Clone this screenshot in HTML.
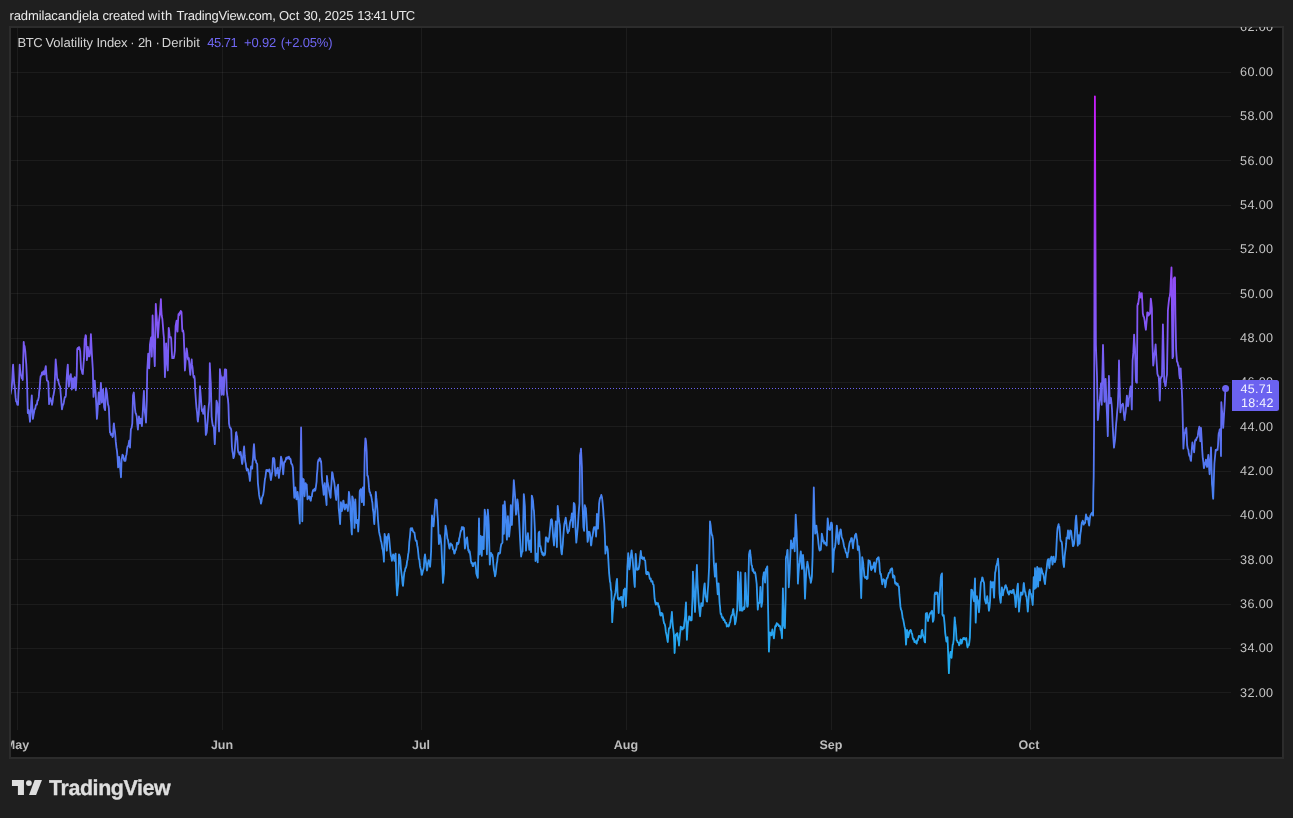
<!DOCTYPE html>
<html><head><meta charset="utf-8"><title>BTC Volatility Index</title>
<style>
html,body{margin:0;padding:0;}
body{-webkit-font-smoothing:antialiased;text-rendering:geometricPrecision;width:1293px;height:818px;background:#1f1f1f;position:relative;overflow:hidden;font-family:"Liberation Sans",sans-serif;}
#hdr,#leg,.yl,.xl,#plabel,#logotxt{will-change:transform;}
#hdr{position:absolute;left:0;top:7.7px;font-size:13px;line-height:15px;color:#e8e8e8;white-space:nowrap;}
#hdr span,#leg span{position:absolute;top:0;white-space:nowrap;}
#frame{position:absolute;left:9px;top:26px;width:1271px;height:729px;border:2px solid #2c2c2c;background:#0f0f0f;}
#chart{position:absolute;left:0;top:0;width:1293px;height:818px;}
#clip{position:absolute;left:11px;top:26.8px;width:1271px;height:730.2px;overflow:hidden;}
#clipin{position:absolute;left:-11px;top:-26.8px;width:1293px;height:818px;}
.yl{position:absolute;left:1240.4px;width:40px;font-size:12.6px;line-height:16px;color:#c4c4c4;white-space:nowrap;letter-spacing:0.4px;}
.xl{position:absolute;top:736.8px;width:60px;text-align:center;font-size:12.5px;line-height:16px;font-weight:bold;color:#bcbcbc;white-space:nowrap;}
#leg{position:absolute;left:0;top:35.2px;font-size:13px;line-height:16px;color:#d4d4d4;white-space:nowrap;}
#leg .v{color:#6f66f2;}
#plabel{position:absolute;left:1232px;top:380px;width:47px;height:31px;background:#6b62f0;border-radius:0 2.5px 2.5px 0;color:#f4f4ff;font-size:12.5px;line-height:14.5px;letter-spacing:0.25px;}
#plabel div{position:absolute;left:8.3px;white-space:nowrap;}
#logo{position:absolute;left:0;top:0;}
#logotxt{position:absolute;left:48.5px;top:774.5px;font-size:21.4px;line-height:26px;font-weight:bold;color:#dedede;white-space:nowrap;letter-spacing:-0.39px;-webkit-text-stroke:0.35px #dedede;}
</style></head>
<body>
<div id="hdr"><span style="left:9.5px;letter-spacing:-0.11px">radmilacandjela</span><span style="left:102.4px;letter-spacing:-0.17px">created</span><span style="left:147.8px;letter-spacing:0.43px">with</span><span style="left:176.5px;letter-spacing:-0.22px">TradingView.com,</span><span style="left:278.9px;letter-spacing:0.1px">Oct</span><span style="left:303.4px;letter-spacing:0px">30,</span><span style="left:324.6px;letter-spacing:0px">2025</span><span style="left:357.3px;letter-spacing:-0.6px">13:41</span><span style="left:390.0px;letter-spacing:-0.75px">UTC</span></div>
<div id="frame"></div>
<div id="clip"><div id="clipin">
<svg id="chart" width="1293" height="818" viewBox="0 0 1293 818">
<defs><linearGradient id="lg" gradientUnits="userSpaceOnUse" x1="0" y1="96" x2="0" y2="676"><stop offset="0.0000" stop-color="#c81efa"/><stop offset="0.1103" stop-color="#bd25f9"/><stop offset="0.2138" stop-color="#a636f8"/><stop offset="0.3000" stop-color="#9449f6"/><stop offset="0.3517" stop-color="#8952f6"/><stop offset="0.4293" stop-color="#7b5cf6"/><stop offset="0.5034" stop-color="#6d64f2"/><stop offset="0.5759" stop-color="#5e6ff2"/><stop offset="0.6448" stop-color="#507af3"/><stop offset="0.7224" stop-color="#4386f2"/><stop offset="0.8000" stop-color="#3791f0"/><stop offset="0.8776" stop-color="#2d9cef"/><stop offset="0.9552" stop-color="#23a7ef"/><stop offset="1.0000" stop-color="#1eaeef"/></linearGradient></defs>
<rect x="11" y="72" width="1220" height="1" fill="rgba(255,255,255,0.055)"/><rect x="11" y="116" width="1220" height="1" fill="rgba(255,255,255,0.055)"/><rect x="11" y="160" width="1220" height="1" fill="rgba(255,255,255,0.055)"/><rect x="11" y="205" width="1220" height="1" fill="rgba(255,255,255,0.055)"/><rect x="11" y="249" width="1220" height="1" fill="rgba(255,255,255,0.055)"/><rect x="11" y="293" width="1220" height="1" fill="rgba(255,255,255,0.055)"/><rect x="11" y="338" width="1220" height="1" fill="rgba(255,255,255,0.055)"/><rect x="11" y="382" width="1220" height="1" fill="rgba(255,255,255,0.055)"/><rect x="11" y="426" width="1220" height="1" fill="rgba(255,255,255,0.055)"/><rect x="11" y="471" width="1220" height="1" fill="rgba(255,255,255,0.055)"/><rect x="11" y="515" width="1220" height="1" fill="rgba(255,255,255,0.055)"/><rect x="11" y="559" width="1220" height="1" fill="rgba(255,255,255,0.055)"/><rect x="11" y="604" width="1220" height="1" fill="rgba(255,255,255,0.055)"/><rect x="11" y="648" width="1220" height="1" fill="rgba(255,255,255,0.055)"/><rect x="11" y="692" width="1220" height="1" fill="rgba(255,255,255,0.055)"/>
<rect x="17.00" y="28" width="1" height="702" fill="rgba(255,255,255,0.055)"/><rect x="222.00" y="28" width="1" height="702" fill="rgba(255,255,255,0.055)"/><rect x="421.00" y="28" width="1" height="702" fill="rgba(255,255,255,0.055)"/><rect x="626.00" y="28" width="1" height="702" fill="rgba(255,255,255,0.055)"/><rect x="831.00" y="28" width="1" height="702" fill="rgba(255,255,255,0.055)"/><rect x="1030.00" y="28" width="1" height="702" fill="rgba(255,255,255,0.055)"/>
<line x1="10" y1="388.5" x2="1231" y2="388.5" stroke="#6b62f0" stroke-width="1" stroke-dasharray="1 2"/>
<path d="M10.6,393.9 L11.2,390.0 L11.7,388.1 L12.3,379.4 L12.8,367.5 L13.1,364.6 L13.4,370.7 L14.2,383.7 L14.5,385.0 L15.0,389.5 L15.6,397.4 L16.1,401.3 L16.8,402.0 L17.3,404.6 L18.0,404.9 L18.4,394.4 L19.0,383.7 L19.7,364.6 L20.1,369.5 L20.9,374.9 L21.2,375.4 L21.8,378.2 L22.4,378.6 L22.7,380.0 L23.7,341.9 L24.0,345.3 L24.6,346.0 L25.3,351.4 L25.7,357.3 L26.3,364.6 L26.8,375.9 L27.1,383.7 L27.4,397.8 L27.8,413.0 L28.5,409.8 L28.8,410.1 L29.1,413.9 L29.6,417.8 L30.0,421.8 L30.8,411.0 L31.3,401.4 L31.8,395.4 L32.4,409.5 L32.9,418.9 L33.6,414.5 L34.1,412.4 L34.4,410.1 L34.7,409.0 L35.2,408.8 L35.8,405.5 L36.6,404.2 L36.9,404.5 L37.5,400.3 L38.0,400.6 L38.8,396.9 L39.2,391.8 L39.7,387.5 L40.3,379.1 L40.6,376.3 L41.4,375.6 L42.0,372.4 L42.5,374.6 L43.2,371.9 L43.6,371.2 L44.2,374.6 L44.6,374.0 L45.3,368.5 L45.8,366.1 L46.4,375.2 L46.9,380.7 L47.6,380.7 L48.3,382.2 L48.7,393.1 L49.1,404.2 L49.8,399.9 L50.5,398.3 L50.9,401.0 L51.5,401.2 L52.0,404.9 L52.6,401.9 L53.2,396.0 L53.5,395.4 L54.3,390.6 L54.6,386.6 L55.4,366.6 L55.7,359.5 L56.0,363.5 L56.5,368.7 L57.1,377.8 L57.6,380.3 L58.2,379.5 L58.6,382.2 L59.3,385.1 L60.1,386.6 L60.4,390.2 L61.1,398.3 L61.6,405.0 L62.0,409.3 L62.7,405.5 L63.4,404.2 L63.8,402.7 L64.5,398.3 L64.9,397.0 L65.5,397.0 L65.9,395.4 L66.7,377.8 L67.2,370.7 L67.8,364.6 L68.3,375.5 L68.9,386.6 L69.6,377.8 L70.0,376.2 L70.5,375.6 L70.8,374.1 L71.1,378.0 L71.8,389.5 L72.2,385.5 L72.8,378.5 L73.3,382.7 L73.7,388.1 L74.4,380.5 L74.7,377.1 L75.0,379.7 L75.8,390.3 L76.1,385.7 L76.7,374.9 L77.2,349.2 L77.8,347.9 L78.4,349.1 L79.1,347.0 L79.5,348.0 L80.2,351.4 L80.6,360.4 L81.1,369.0 L81.7,370.4 L82.3,373.4 L82.8,374.1 L83.4,365.8 L84.0,358.7 L84.7,338.9 L85.1,338.7 L85.6,335.2 L86.0,336.0 L86.9,360.2 L87.3,356.0 L87.9,347.0 L88.4,351.0 L89.0,356.5 L89.6,356.1 L90.1,352.9 L90.9,334.1 L91.2,340.4 L91.9,354.3 L92.4,362.6 L92.8,369.0 L93.5,396.9 L94.0,388.8 L94.8,380.7 L95.2,387.1 L95.7,393.9 L96.3,405.5 L96.9,418.9 L97.4,413.9 L97.8,407.1 L98.7,392.5 L99.1,396.4 L99.7,404.2 L100.2,396.0 L100.9,382.9 L101.3,389.9 L101.9,402.7 L102.4,397.5 L103.1,389.5 L103.6,396.9 L104.1,407.1 L104.7,409.3 L105.1,410.1 L106.0,388.1 L106.4,389.8 L107.0,393.9 L107.7,401.3 L108.0,404.4 L108.6,406.1 L108.9,408.6 L109.2,415.8 L109.9,432.1 L110.3,432.0 L110.8,434.8 L111.4,435.0 L112.0,434.0 L112.5,437.1 L112.9,436.5 L113.6,425.7 L113.9,423.3 L114.2,427.2 L114.9,431.4 L115.3,435.7 L115.8,441.9 L116.4,447.4 L117.0,451.2 L117.6,458.0 L118.1,467.4 L118.7,462.7 L119.1,457.0 L119.9,466.3 L120.4,470.3 L121.0,477.3 L121.6,459.3 L122.0,457.6 L122.5,454.7 L123.2,455.6 L123.9,459.3 L124.3,460.8 L124.8,458.7 L125.4,460.8 L125.7,459.3 L126.0,456.0 L126.5,454.7 L127.2,448.9 L127.6,446.6 L128.2,446.0 L128.6,444.2 L129.2,440.7 L130.0,447.7 L130.4,438.2 L130.9,429.1 L131.6,427.9 L132.3,423.3 L132.7,407.5 L133.0,395.4 L133.8,392.5 L134.6,403.6 L134.9,408.1 L135.5,412.9 L136.0,413.8 L136.7,416.3 L137.2,422.8 L137.9,429.7 L138.3,424.0 L139.0,416.3 L139.4,419.8 L140.0,423.3 L140.5,419.8 L140.8,418.7 L141.1,421.9 L141.6,424.0 L141.9,426.2 L142.2,421.8 L142.9,409.4 L143.3,400.6 L143.9,390.8 L144.4,404.8 L144.8,411.7 L145.6,417.6 L146.0,422.7 L146.8,400.0 L147.2,371.3 L147.8,361.4 L148.2,353.7 L148.9,362.7 L149.2,368.3 L149.5,359.5 L149.9,344.9 L150.6,340.2 L151.1,337.5 L151.8,356.6 L152.3,332.6 L152.6,315.5 L153.6,343.4 L154.0,349.3 L154.5,361.2 L154.8,366.1 L155.1,348.1 L155.8,303.8 L156.2,310.5 L157.0,321.4 L157.3,325.5 L158.0,337.5 L158.4,330.9 L159.0,321.4 L159.6,316.1 L159.9,314.1 L160.9,299.1 L161.2,307.5 L161.7,315.5 L162.4,319.2 L162.8,324.3 L163.5,333.6 L163.9,337.5 L164.6,364.0 L164.9,377.1 L165.2,370.9 L165.7,353.6 L166.1,343.4 L166.8,359.5 L167.4,366.5 L167.8,370.5 L168.7,328.0 L169.1,330.1 L169.6,335.4 L170.2,337.5 L170.8,337.1 L171.2,339.0 L171.9,353.5 L172.2,358.1 L173.0,357.8 L173.7,358.1 L174.1,356.6 L174.9,350.7 L175.2,337.7 L175.6,325.8 L176.6,320.7 L176.9,325.9 L177.5,331.7 L178.0,321.5 L178.5,314.1 L179.2,315.0 L179.7,312.5 L180.0,312.6 L180.3,313.5 L180.8,310.9 L181.5,311.9 L182.2,328.7 L182.5,331.3 L183.1,330.5 L183.7,333.9 L184.4,353.7 L184.9,370.5 L185.3,365.9 L185.9,356.6 L186.6,348.5 L187.0,350.4 L187.8,358.1 L188.1,359.6 L188.8,358.1 L189.2,362.3 L189.8,370.5 L190.3,374.9 L190.9,366.6 L191.7,359.5 L192.0,364.4 L192.6,367.9 L193.2,374.9 L193.7,377.5 L194.3,376.1 L194.7,378.6 L195.3,392.0 L196.0,402.0 L196.5,408.2 L197.1,412.6 L197.6,419.9 L197.9,421.6 L198.2,418.0 L198.8,414.0 L199.3,403.1 L200.0,386.2 L200.4,391.5 L200.8,396.6 L201.7,409.4 L202.1,411.4 L202.7,409.7 L203.2,413.8 L203.5,412.9 L203.8,409.7 L204.6,405.9 L204.9,414.5 L205.5,425.9 L205.8,434.9 L206.6,432.6 L206.9,430.3 L207.2,425.9 L207.7,420.6 L208.1,414.0 L208.8,405.7 L209.3,401.3 L209.8,363.2 L210.5,378.7 L210.8,383.0 L211.1,394.3 L211.6,416.3 L212.2,422.0 L212.8,425.6 L213.3,425.8 L213.9,428.0 L214.4,438.3 L214.8,444.2 L215.6,426.1 L215.9,419.8 L216.5,400.7 L217.4,403.6 L217.8,410.4 L218.2,415.2 L219.1,431.4 L219.5,400.7 L219.9,369.1 L220.6,375.3 L221.1,377.1 L221.8,394.8 L222.3,387.1 L223.0,377.1 L223.4,387.5 L223.7,394.8 L224.0,388.2 L224.5,377.4 L224.8,369.8 L225.1,369.2 L225.6,370.3 L226.2,369.8 L226.7,390.4 L227.3,395.4 L227.9,398.8 L228.4,404.7 L229.0,423.3 L229.6,426.7 L230.2,428.0 L230.7,428.1 L231.3,430.3 L231.9,446.5 L232.4,451.5 L232.9,453.6 L233.4,458.1 L234.0,456.6 L234.5,453.5 L235.2,443.7 L235.7,437.4 L236.0,432.6 L236.3,432.1 L236.8,436.8 L237.1,436.1 L237.4,439.9 L237.9,450.0 L238.5,452.6 L239.1,452.4 L239.5,454.7 L240.2,453.6 L240.6,451.8 L241.3,457.2 L242.1,464.0 L242.4,463.0 L242.9,459.3 L243.6,450.9 L244.1,446.5 L244.7,455.2 L245.3,461.6 L245.8,463.6 L246.4,468.6 L246.9,470.5 L247.5,468.6 L248.2,469.8 L248.6,473.0 L249.2,475.2 L249.9,481.0 L250.3,477.0 L250.8,468.9 L251.1,466.3 L251.4,467.8 L252.2,468.6 L252.5,463.1 L253.1,457.6 L253.6,448.4 L254.0,444.2 L254.8,456.5 L255.1,460.0 L255.9,460.3 L256.2,462.6 L257.2,464.0 L257.6,474.7 L257.9,483.1 L258.7,490.4 L259.1,494.9 L259.8,498.7 L260.4,499.6 L260.9,503.7 L261.5,501.5 L262.0,497.5 L262.6,496.3 L263.2,494.6 L263.8,490.5 L264.3,485.1 L265.0,478.7 L265.4,477.5 L266.0,472.3 L266.4,469.9 L267.1,471.0 L267.6,470.0 L268.2,471.4 L268.8,471.5 L269.3,469.4 L269.7,470.6 L270.4,477.1 L270.9,480.2 L271.6,475.6 L272.3,471.4 L272.9,458.2 L273.2,458.9 L273.8,457.9 L274.4,459.6 L274.9,468.1 L275.5,475.8 L276.0,472.8 L276.6,473.1 L277.2,468.6 L277.8,467.7 L278.3,473.7 L278.9,478.0 L279.4,473.1 L280.2,468.4 L280.5,464.3 L281.0,456.7 L281.6,458.9 L282.2,462.6 L282.8,469.7 L283.2,474.3 L284.1,462.6 L284.4,461.7 L285.0,461.9 L285.8,459.6 L286.1,458.0 L286.7,459.1 L287.2,457.2 L287.6,457.4 L288.4,458.4 L288.9,456.6 L289.5,459.0 L289.9,458.2 L290.6,459.3 L291.2,463.5 L291.7,464.0 L292.3,465.0 L292.9,467.7 L293.6,483.1 L294.0,492.0 L294.3,497.8 L295.1,489.0 L295.4,487.5 L296.2,496.5 L296.5,499.3 L296.8,496.0 L297.3,495.0 L297.6,491.9 L297.9,494.7 L298.6,503.7 L299.0,511.2 L299.8,523.5 L300.1,498.7 L300.7,460.0 L301.1,427.5 L301.8,481.4 L302.3,521.3 L302.8,478.7 L303.7,479.4 L304.0,486.8 L304.6,496.3 L305.2,487.5 L305.6,483.1 L306.3,485.4 L306.7,484.6 L307.5,499.3 L308.0,496.9 L308.5,498.2 L309.0,496.3 L309.6,496.7 L310.2,499.8 L310.8,500.7 L311.3,496.7 L311.9,496.4 L312.2,493.4 L313.0,490.3 L313.7,489.7 L314.1,490.8 L314.7,488.7 L315.2,490.6 L315.6,489.0 L316.6,481.6 L316.9,475.0 L317.5,469.2 L317.8,462.6 L318.6,459.6 L319.2,460.6 L319.6,458.2 L320.3,458.8 L320.8,462.1 L321.1,461.1 L321.4,466.0 L321.8,475.8 L322.5,483.9 L322.8,486.0 L323.1,488.3 L323.7,494.9 L324.2,489.9 L324.7,483.1 L325.3,490.3 L325.7,496.3 L326.6,505.1 L326.9,475.8 L327.6,481.9 L328.1,484.6 L328.7,487.1 L329.1,490.5 L329.8,494.3 L330.6,497.8 L330.9,491.0 L331.5,483.1 L332.1,472.1 L332.6,473.1 L333.2,477.6 L333.5,478.7 L334.3,482.7 L334.7,486.0 L335.4,493.9 L336.2,500.0 L336.5,495.5 L337.2,487.5 L337.6,486.6 L338.1,484.6 L338.7,508.1 L339.3,514.2 L340.1,524.2 L340.4,516.1 L340.9,502.2 L341.6,506.6 L341.9,511.0 L342.7,507.2 L343.2,500.8 L343.5,500.7 L343.8,503.7 L344.4,505.0 L344.8,509.5 L345.5,507.6 L346.0,504.7 L346.3,504.4 L346.6,506.6 L347.2,507.3 L347.9,511.0 L348.3,505.0 L348.9,491.9 L349.4,495.1 L350.1,502.2 L350.5,513.7 L350.8,519.8 L351.1,522.1 L351.6,532.1 L351.9,534.5 L352.2,496.3 L352.8,497.9 L353.3,501.8 L353.6,502.2 L353.9,508.8 L354.5,527.9 L355.0,511.5 L355.3,499.3 L355.6,504.8 L356.3,522.7 L356.7,523.0 L357.3,519.8 L357.8,524.7 L358.2,531.5 L358.9,519.8 L359.2,513.9 L359.7,491.9 L360.0,490.1 L360.6,490.5 L361.0,489.0 L361.9,502.2 L362.3,495.6 L362.9,487.5 L363.4,497.3 L363.9,505.1 L364.5,465.4 L364.8,449.0 L365.1,444.4 L365.4,438.3 L366.0,441.0 L366.7,452.0 L367.3,475.8 L367.9,475.9 L368.3,478.7 L369.0,487.4 L369.5,491.9 L370.1,492.3 L370.7,495.6 L371.0,494.9 L372.0,500.7 L372.4,502.7 L372.9,509.5 L373.2,511.0 L373.5,513.2 L374.0,521.5 L374.3,524.2 L374.6,518.4 L375.4,506.6 L375.8,491.9 L376.3,497.7 L376.8,502.2 L377.4,509.5 L378.0,519.8 L378.7,527.9 L379.1,531.9 L379.8,535.2 L380.2,536.4 L380.8,540.6 L381.3,541.8 L381.7,544.0 L382.4,548.8 L382.8,549.9 L383.6,556.7 L383.9,561.7 L384.6,533.8 L385.2,537.1 L385.6,536.7 L386.4,544.6 L386.8,550.7 L387.5,536.7 L388.0,536.0 L388.6,533.8 L389.2,538.4 L389.7,544.0 L390.3,550.8 L390.9,555.8 L391.4,556.8 L391.9,560.9 L392.5,558.0 L393.1,554.3 L393.6,555.7 L394.4,560.9 L394.8,559.1 L395.3,554.7 L395.6,553.6 L395.9,565.1 L396.3,580.7 L397.1,595.4 L397.6,589.7 L398.3,583.7 L398.7,568.5 L399.0,554.3 L400.0,557.3 L400.4,560.4 L400.9,568.3 L401.5,573.4 L402.0,577.4 L402.6,583.8 L403.0,585.9 L403.7,578.2 L404.4,571.9 L404.8,571.6 L405.4,568.3 L406.0,567.8 L406.6,565.3 L407.1,561.2 L407.6,559.4 L408.2,554.1 L408.5,552.9 L408.8,550.6 L409.3,542.0 L409.6,539.6 L409.9,537.0 L410.6,528.6 L411.0,528.2 L411.6,530.1 L412.1,528.1 L412.5,529.4 L413.2,531.8 L414.0,532.3 L414.4,532.5 L415.0,536.7 L415.5,539.9 L416.0,541.0 L416.6,540.7 L416.9,542.6 L417.2,545.2 L417.7,547.7 L418.4,554.3 L418.8,558.7 L419.4,559.8 L420.0,565.9 L420.3,567.5 L421.1,570.2 L421.6,574.8 L422.0,574.9 L422.8,571.3 L423.5,569.0 L423.9,566.9 L424.4,558.3 L425.0,554.3 L425.6,559.6 L426.1,563.2 L426.9,570.5 L427.2,569.7 L427.8,564.4 L428.6,560.2 L428.9,562.1 L429.5,562.7 L430.1,566.8 L430.6,560.0 L431.1,551.4 L431.7,525.3 L432.0,515.4 L432.3,517.9 L432.8,520.7 L433.5,526.4 L434.0,520.9 L434.5,511.8 L435.1,504.2 L435.5,499.3 L436.2,500.3 L436.7,500.0 L437.4,513.2 L437.9,519.9 L438.2,526.4 L438.9,544.0 L439.6,539.7 L439.9,535.2 L440.7,539.0 L441.4,545.5 L441.8,555.1 L442.3,566.1 L443.0,582.9 L443.5,577.4 L444.0,573.4 L444.8,536.7 L445.2,532.3 L445.5,525.7 L446.3,529.7 L447.0,535.2 L447.4,538.6 L448.0,539.8 L448.5,543.3 L449.1,546.7 L449.5,548.5 L450.2,545.0 L450.7,543.3 L451.3,544.9 L451.9,544.6 L452.6,547.0 L453.0,549.5 L453.6,549.7 L454.3,553.6 L454.7,553.2 L455.2,550.7 L455.8,549.9 L456.4,547.8 L456.9,543.1 L457.3,542.6 L458.0,544.2 L458.7,542.6 L459.2,538.4 L459.7,537.1 L460.2,533.8 L460.8,530.9 L461.4,530.6 L461.7,527.9 L462.0,527.0 L462.5,529.2 L463.1,527.2 L463.6,528.8 L463.9,527.9 L464.2,533.1 L464.9,548.5 L465.3,546.8 L466.1,541.1 L466.4,538.8 L467.1,537.4 L467.6,542.8 L468.3,550.7 L468.7,549.7 L469.2,552.6 L469.7,551.4 L470.4,556.1 L470.8,560.2 L471.5,563.2 L472.0,562.8 L472.7,566.1 L473.2,566.0 L473.7,563.3 L474.1,563.1 L474.8,563.2 L475.2,562.4 L476.0,569.0 L476.3,573.4 L477.1,576.0 L477.8,577.8 L478.2,560.4 L478.5,549.9 L479.0,518.4 L479.3,536.2 L479.7,554.3 L480.4,539.5 L480.7,536.0 L481.0,542.8 L481.8,555.8 L482.1,545.9 L482.5,536.7 L483.2,545.2 L483.7,549.2 L484.4,522.0 L484.7,509.6 L485.5,515.3 L485.9,516.9 L486.6,541.5 L486.9,554.3 L487.2,542.7 L487.8,509.6 L488.3,516.3 L488.8,525.0 L489.4,550.2 L489.8,564.6 L490.5,556.3 L491.0,552.9 L491.6,555.8 L492.2,554.5 L492.8,557.3 L493.3,563.9 L494.0,570.5 L494.4,571.6 L495.0,576.3 L495.6,574.3 L496.2,569.0 L496.7,563.8 L497.2,561.6 L497.6,557.3 L498.4,553.0 L498.7,552.9 L499.5,553.7 L500.1,552.9 L500.6,547.9 L501.3,544.0 L501.7,543.9 L502.5,542.6 L502.8,520.6 L503.1,505.2 L503.4,516.8 L503.9,533.8 L504.7,501.5 L505.1,506.8 L505.7,516.2 L506.2,526.7 L506.9,539.6 L507.3,528.6 L507.9,516.2 L508.4,526.5 L509.1,536.7 L509.6,531.3 L510.1,526.4 L510.8,505.2 L511.2,514.6 L511.9,525.0 L512.4,512.0 L512.7,504.4 L513.5,488.0 L513.8,480.2 L514.8,492.7 L515.2,498.1 L515.7,510.6 L516.0,514.7 L516.3,510.6 L516.8,506.3 L517.4,499.3 L518.0,504.0 L518.5,513.1 L518.9,516.2 L519.6,529.4 L520.1,539.6 L520.8,552.0 L521.1,556.5 L521.9,552.3 L522.6,551.4 L523.0,532.7 L523.8,494.2 L524.1,496.7 L524.9,506.6 L525.2,521.5 L526.0,550.7 L526.4,544.7 L526.8,538.9 L527.5,536.1 L527.9,533.1 L528.6,541.1 L529.3,549.9 L529.7,546.8 L530.4,540.4 L530.8,547.0 L531.1,552.1 L531.4,528.3 L531.8,495.6 L532.5,498.1 L533.0,500.8 L533.6,508.8 L534.0,511.0 L534.9,530.1 L535.5,561.0 L535.9,557.6 L536.4,556.2 L536.7,553.6 L537.0,554.7 L537.7,562.4 L538.1,549.8 L538.6,533.1 L539.3,531.6 L539.9,546.3 L540.4,545.8 L541.1,549.2 L541.5,552.0 L542.0,551.8 L542.3,554.3 L542.6,554.7 L543.2,553.2 L543.7,555.6 L544.0,554.3 L544.3,553.6 L544.8,554.8 L545.2,552.9 L545.8,537.5 L546.5,537.4 L547.0,538.2 L547.6,541.3 L548.1,541.9 L548.8,538.7 L549.2,537.5 L549.9,530.1 L550.4,525.5 L550.9,519.9 L551.6,519.2 L552.1,520.6 L552.8,531.6 L553.2,537.1 L554.0,545.5 L554.4,539.5 L555.0,533.1 L555.5,526.9 L555.8,521.3 L556.6,539.0 L556.9,547.0 L557.2,534.7 L557.7,505.9 L558.3,511.5 L558.7,516.9 L559.4,522.7 L559.9,525.7 L560.5,538.2 L560.9,547.7 L561.6,553.6 L561.9,554.3 L562.2,549.8 L562.8,544.5 L563.1,538.9 L563.9,528.7 L564.3,524.3 L565.0,521.3 L565.7,517.7 L566.1,520.7 L566.8,527.2 L567.2,530.2 L567.8,533.1 L568.4,530.9 L568.9,531.1 L569.3,528.7 L570.0,522.9 L570.4,521.3 L571.2,518.7 L571.9,513.3 L572.3,517.3 L572.9,527.2 L573.4,514.1 L573.8,503.0 L574.5,504.0 L574.8,506.6 L575.1,516.4 L575.6,530.1 L576.3,542.6 L576.8,537.4 L577.5,530.1 L577.9,526.0 L578.5,515.5 L579.0,508.7 L579.5,503.7 L580.0,455.3 L580.7,451.7 L581.0,448.7 L581.9,467.0 L582.5,503.7 L582.9,513.1 L583.4,527.2 L584.1,530.9 L584.8,505.2 L585.2,506.9 L585.8,508.1 L586.3,515.0 L586.6,521.3 L587.6,541.9 L588.0,540.3 L588.5,532.8 L588.8,531.6 L589.1,533.2 L589.6,532.1 L590.0,534.5 L591.0,545.5 L591.3,544.8 L591.9,538.8 L592.5,536.0 L593.0,533.1 L593.6,528.7 L594.1,527.1 L594.7,528.5 L595.1,527.2 L595.8,533.3 L596.1,536.7 L596.4,529.7 L596.9,514.0 L597.5,520.8 L598.0,528.7 L598.6,515.5 L599.1,503.7 L599.7,499.5 L600.2,497.8 L600.8,497.3 L601.3,494.9 L602.0,497.5 L602.4,500.8 L603.2,509.6 L603.6,516.1 L604.2,522.8 L604.9,536.0 L605.4,553.6 L605.9,550.0 L606.4,549.0 L606.8,546.3 L607.6,548.9 L607.9,552.0 L608.8,567.9 L609.2,574.0 L610.0,581.8 L610.4,582.7 L610.9,589.6 L611.4,591.4 L612.2,622.2 L612.6,614.6 L613.2,607.6 L613.5,601.6 L614.3,597.4 L614.7,595.8 L615.4,592.9 L615.9,588.4 L616.5,581.7 L617.0,578.9 L617.6,594.1 L617.9,598.7 L618.2,598.0 L618.8,599.7 L619.3,598.0 L619.8,599.4 L620.4,599.7 L621.0,596.9 L621.7,597.2 L622.1,602.3 L622.8,607.5 L623.2,598.5 L623.8,589.9 L624.4,589.8 L624.9,588.5 L625.5,599.1 L625.8,606.0 L626.7,588.4 L627.4,566.4 L627.7,562.7 L628.2,553.2 L628.8,560.3 L629.4,569.4 L630.0,565.1 L630.4,559.1 L631.1,553.7 L631.6,550.3 L632.2,556.0 L632.6,559.1 L633.3,568.1 L633.8,575.2 L634.4,583.6 L634.8,587.0 L635.7,553.9 L636.1,559.3 L636.7,569.4 L637.2,569.9 L637.8,568.4 L638.5,569.4 L638.9,567.6 L639.6,563.5 L640.0,558.5 L640.8,551.0 L641.2,554.8 L641.8,558.3 L642.3,557.1 L642.8,559.0 L643.6,557.6 L644.0,557.5 L644.5,560.2 L645.2,560.5 L645.6,565.8 L646.2,573.8 L646.8,574.2 L647.3,571.8 L647.9,574.0 L648.4,572.3 L649.0,574.5 L649.6,577.9 L649.9,578.9 L650.7,578.5 L651.2,581.7 L651.7,581.1 L652.4,581.1 L652.9,584.1 L653.6,584.8 L654.0,590.1 L654.6,598.7 L655.2,602.1 L655.8,604.6 L656.3,602.7 L656.8,604.3 L657.2,603.1 L658.0,603.2 L658.5,606.8 L659.0,606.0 L659.6,610.0 L660.2,614.9 L660.8,615.5 L661.3,612.9 L661.9,615.3 L662.4,613.4 L663.0,616.5 L663.4,620.0 L664.1,623.3 L664.7,624.0 L665.3,626.6 L665.8,631.7 L666.3,633.9 L666.9,636.8 L667.5,640.7 L667.8,642.0 L668.6,631.7 L669.0,628.1 L669.7,628.1 L670.2,626.6 L670.8,620.7 L671.2,619.3 L671.9,611.9 L672.5,621.7 L672.9,626.6 L673.8,633.9 L674.2,642.1 L674.6,653.0 L675.3,640.7 L675.6,635.4 L675.9,634.5 L676.4,635.5 L677.0,633.3 L677.4,633.2 L678.1,639.5 L678.7,642.0 L679.0,645.7 L680.0,633.9 L680.4,631.4 L680.7,626.6 L681.5,627.4 L682.2,629.5 L682.6,629.4 L683.2,627.2 L683.7,628.3 L684.0,626.6 L684.3,623.2 L684.8,619.2 L685.1,616.3 L685.4,610.4 L686.0,602.4 L686.5,625.1 L686.9,639.8 L687.6,627.5 L688.1,622.2 L688.8,619.8 L689.1,616.3 L689.9,616.8 L690.3,619.3 L691.0,620.5 L691.7,620.0 L692.1,607.5 L692.5,598.7 L692.9,571.6 L693.2,578.0 L693.9,588.4 L694.4,597.5 L695.0,611.9 L695.7,595.8 L696.0,587.9 L696.6,571.2 L696.9,565.0 L697.2,573.5 L697.6,584.0 L698.3,595.3 L698.6,601.6 L699.4,610.2 L700.1,616.3 L700.5,610.9 L701.3,603.1 L701.6,604.6 L702.2,604.1 L702.7,606.0 L703.3,597.7 L703.8,589.9 L704.4,584.6 L704.7,583.3 L705.0,588.5 L705.7,597.2 L706.1,597.2 L706.7,601.3 L707.1,601.6 L707.8,590.0 L708.2,585.5 L709.1,567.2 L709.5,548.9 L710.0,521.3 L710.6,525.1 L711.2,531.1 L711.9,535.2 L712.3,535.4 L713.0,540.0 L713.4,551.7 L713.8,562.0 L714.5,571.3 L714.9,576.7 L715.6,568.8 L716.0,563.5 L716.7,581.1 L717.3,588.3 L717.7,594.3 L718.6,583.3 L719.0,592.3 L719.6,603.1 L720.1,607.3 L720.4,611.9 L720.7,614.1 L721.2,613.7 L721.8,617.1 L722.4,618.1 L722.9,617.2 L723.5,620.1 L724.0,619.3 L724.6,620.3 L725.2,622.5 L725.5,622.9 L726.3,622.9 L726.8,626.6 L727.3,625.9 L728.0,625.2 L728.5,626.5 L729.2,625.1 L729.6,622.8 L730.2,622.2 L730.6,619.3 L731.3,616.0 L732.1,614.9 L732.4,613.9 L733.0,609.9 L733.3,609.0 L733.6,612.2 L734.3,616.3 L734.7,619.7 L735.0,624.4 L735.8,621.3 L736.2,617.8 L736.9,611.7 L737.2,610.5 L737.5,597.6 L738.0,571.6 L738.6,583.7 L739.0,594.3 L739.9,610.5 L740.3,590.9 L740.6,572.3 L741.6,610.5 L742.0,609.2 L742.5,610.6 L743.1,609.0 L743.6,607.2 L744.2,609.1 L744.6,607.5 L745.3,573.0 L745.9,584.7 L746.3,595.8 L747.2,606.8 L747.6,606.7 L748.0,604.6 L748.7,569.3 L749.0,554.7 L749.6,551.4 L750.1,550.3 L750.4,554.2 L750.9,557.6 L751.2,562.0 L751.5,565.0 L752.0,565.7 L752.3,568.6 L752.6,570.8 L753.2,569.2 L753.5,571.6 L754.3,573.1 L755.0,572.3 L755.4,573.7 L756.0,578.2 L756.7,584.0 L757.1,594.1 L757.8,609.7 L758.2,605.1 L758.6,603.1 L759.3,603.0 L759.7,601.6 L760.4,587.0 L761.0,598.0 L761.4,606.8 L762.3,601.6 L762.9,578.2 L763.2,577.0 L763.8,572.5 L764.1,572.3 L764.4,576.6 L765.1,582.6 L765.5,574.6 L765.8,569.4 L766.6,568.3 L767.3,566.4 L767.8,594.3 L768.2,613.4 L768.9,651.6 L769.4,642.3 L770.0,632.5 L770.5,634.4 L771.1,634.0 L771.4,635.4 L772.4,629.5 L772.8,633.2 L773.3,634.5 L773.9,638.3 L774.4,633.7 L775.1,626.6 L775.6,625.5 L776.1,626.4 L776.7,623.2 L777.3,623.7 L777.8,624.7 L778.4,624.4 L778.9,626.2 L779.5,625.9 L780.0,626.1 L780.6,630.0 L781.0,629.5 L781.7,635.5 L782.0,638.3 L782.3,623.2 L782.9,588.4 L783.4,606.2 L783.9,625.1 L784.5,627.6 L784.9,628.1 L785.6,598.7 L785.9,558.7 L786.2,556.5 L786.8,555.5 L787.3,550.3 L787.6,549.9 L787.9,559.2 L788.4,575.5 L788.8,587.3 L789.6,572.7 L790.0,563.1 L790.7,547.1 L791.0,540.3 L791.8,545.9 L792.5,548.4 L792.9,544.6 L793.5,542.2 L793.9,538.1 L794.7,551.3 L795.2,533.1 L795.7,514.6 L796.3,526.0 L796.6,530.8 L797.3,551.3 L797.9,583.6 L798.5,573.9 L799.1,566.0 L799.6,562.7 L800.1,557.2 L800.8,551.3 L801.3,557.4 L802.0,568.9 L802.4,563.5 L803.0,555.0 L803.6,561.9 L804.2,571.9 L804.7,589.5 L805.0,598.7 L805.8,580.7 L806.4,568.9 L806.9,565.7 L807.4,561.6 L808.0,565.1 L808.6,568.9 L809.2,574.5 L809.8,577.7 L810.3,578.9 L810.8,582.9 L811.4,580.1 L811.9,576.3 L812.6,555.7 L813.2,519.0 L813.8,487.5 L814.2,504.5 L814.5,519.0 L814.8,525.4 L815.2,533.7 L815.9,528.4 L816.4,525.6 L817.0,532.0 L817.4,533.7 L818.1,539.3 L818.5,544.0 L819.2,549.1 L819.6,550.6 L820.4,549.8 L820.8,549.9 L821.5,539.8 L821.8,533.7 L822.6,537.2 L822.9,539.6 L823.2,541.6 L823.7,540.5 L824.0,542.5 L824.3,543.7 L824.8,542.4 L825.5,543.3 L826.0,544.7 L826.7,545.5 L827.1,534.4 L827.7,518.3 L828.2,523.5 L828.9,529.3 L829.3,528.1 L830.0,530.0 L830.4,528.1 L831.1,522.7 L831.6,522.6 L832.1,524.9 L832.8,571.9 L833.2,565.3 L833.9,551.3 L834.4,548.8 L835.0,546.9 L835.5,543.5 L835.8,539.6 L836.8,525.6 L837.2,529.5 L837.7,536.6 L838.3,542.2 L838.7,544.0 L839.4,535.4 L839.7,532.2 L840.0,533.1 L840.5,529.3 L840.9,530.0 L841.6,536.4 L842.1,538.1 L842.8,539.9 L843.4,542.5 L843.9,545.5 L844.6,548.4 L845.0,548.3 L845.6,551.7 L846.1,552.8 L846.7,553.7 L847.2,557.3 L847.5,557.2 L847.8,553.5 L848.4,552.0 L848.7,548.4 L849.5,543.2 L850.2,541.1 L850.6,541.1 L851.2,538.1 L851.9,538.1 L852.3,542.5 L853.0,548.4 L853.4,543.7 L854.1,539.6 L854.5,538.7 L855.1,535.0 L855.6,535.1 L855.9,533.7 L856.2,534.2 L856.8,538.9 L857.1,539.6 L857.8,549.9 L858.4,547.0 L858.8,546.2 L859.7,554.3 L860.1,569.7 L860.4,577.7 L860.7,584.1 L861.2,598.0 L861.8,574.2 L862.2,557.2 L862.9,561.0 L863.2,563.1 L863.5,566.9 L864.0,571.4 L864.4,576.3 L865.2,577.9 L865.9,577.0 L866.3,576.6 L866.8,579.0 L867.6,578.5 L868.0,570.7 L868.5,560.1 L869.1,561.3 L869.8,560.9 L870.2,562.7 L871.0,568.9 L871.3,570.1 L871.9,566.6 L872.4,568.6 L873.2,566.7 L873.6,564.8 L874.2,562.3 L874.7,568.2 L875.1,571.9 L875.8,564.5 L876.1,563.1 L876.4,562.7 L876.9,558.8 L877.2,558.7 L877.5,559.3 L878.0,557.5 L878.6,557.2 L879.4,563.1 L879.8,570.4 L880.3,574.1 L880.8,573.6 L881.3,577.0 L882.0,582.4 L882.3,584.3 L883.1,579.9 L883.5,579.2 L884.2,580.5 L884.5,580.0 L884.8,581.9 L885.2,587.3 L885.9,584.1 L886.4,579.9 L887.0,577.8 L887.6,577.9 L887.9,576.3 L888.7,573.4 L889.3,572.6 L889.8,572.7 L890.4,569.8 L891.1,568.9 L891.5,569.7 L892.0,568.3 L892.3,569.7 L892.6,573.9 L893.0,577.7 L893.7,575.5 L894.5,576.3 L894.8,580.9 L895.2,583.6 L896.0,582.6 L896.5,584.8 L897.1,584.3 L897.6,583.6 L898.2,586.1 L898.9,586.6 L899.4,594.7 L899.9,599.8 L900.4,606.4 L901.0,609.6 L901.6,610.6 L902.3,615.2 L902.7,618.3 L903.2,619.3 L903.8,622.6 L904.4,626.2 L905.0,628.5 L905.5,634.8 L906.0,644.6 L906.6,636.9 L907.0,629.9 L907.7,633.9 L908.2,637.3 L908.8,635.1 L909.4,631.5 L909.7,630.7 L910.0,631.2 L910.5,629.9 L911.1,630.7 L911.6,633.5 L912.2,634.0 L912.6,637.3 L913.3,639.6 L913.9,638.9 L914.4,642.1 L914.8,641.7 L915.6,641.1 L916.3,643.1 L916.7,643.6 L917.2,640.1 L917.8,640.4 L918.2,638.7 L918.9,635.8 L919.2,635.8 L919.5,636.6 L920.0,636.2 L920.7,638.0 L921.2,636.7 L921.7,630.9 L922.2,629.9 L922.8,634.6 L923.6,637.3 L924.0,637.4 L924.5,641.5 L925.1,642.4 L925.8,613.8 L926.2,613.2 L927.0,613.0 L927.3,616.3 L928.0,621.1 L928.4,618.4 L929.0,617.9 L929.5,614.5 L930.1,613.1 L930.7,613.6 L931.0,612.3 L932.0,610.8 L932.4,614.2 L932.9,621.8 L933.5,620.2 L933.9,616.7 L934.6,594.7 L935.2,592.5 L935.7,594.2 L936.1,592.5 L936.8,592.3 L937.6,593.2 L938.0,601.0 L938.7,613.0 L939.1,604.7 L939.8,593.2 L940.2,587.8 L940.8,577.1 L941.3,574.7 L942.0,573.4 L942.4,614.5 L943.0,615.8 L943.7,615.2 L944.1,618.9 L944.6,624.1 L945.2,632.8 L945.6,635.8 L946.4,641.7 L946.9,638.0 L947.5,637.3 L948.1,651.9 L948.6,666.2 L948.9,673.2 L949.2,666.2 L949.6,657.8 L950.5,651.9 L950.8,655.3 L951.5,657.8 L952.0,652.2 L952.7,644.6 L953.1,644.2 L953.7,639.5 L954.2,627.3 L954.7,617.4 L955.3,623.7 L955.9,628.5 L956.6,640.2 L957.0,640.4 L957.6,642.2 L958.1,642.4 L958.7,643.0 L959.1,645.3 L959.8,643.8 L960.6,639.5 L960.9,639.7 L961.5,643.6 L961.8,643.1 L962.6,639.6 L963.3,638.0 L963.7,639.1 L964.3,638.0 L964.7,638.7 L965.4,639.9 L966.2,638.0 L966.5,640.1 L967.2,646.1 L967.6,647.4 L968.2,644.6 L968.8,645.3 L969.3,642.6 L969.9,637.3 L970.6,613.8 L971.0,598.9 L971.3,589.6 L971.6,590.9 L972.1,590.1 L972.8,593.2 L973.2,597.8 L974.0,601.3 L974.4,591.7 L975.0,578.5 L975.7,622.6 L976.0,616.2 L976.6,602.3 L976.9,596.2 L977.2,598.7 L977.9,600.6 L978.3,604.0 L979.0,612.3 L979.4,607.4 L980.1,594.7 L980.5,587.5 L980.9,582.2 L981.6,581.3 L982.2,577.5 L982.6,577.8 L983.3,580.9 L984.1,583.0 L984.4,589.8 L984.8,599.1 L985.6,602.3 L986.0,603.5 L986.7,599.0 L987.2,596.2 L987.8,601.9 L988.4,604.6 L988.9,610.8 L989.5,607.4 L990.1,600.6 L990.7,581.5 L991.2,582.6 L991.9,587.4 L992.3,586.5 L992.8,582.1 L993.1,582.2 L993.4,588.1 L994.1,597.6 L994.5,586.3 L995.1,572.7 L995.6,571.1 L996.2,565.9 L996.6,565.3 L997.3,562.2 L998.0,558.7 L998.4,564.2 L998.9,571.2 L999.5,593.2 L1000.1,599.1 L1000.7,602.8 L1001.2,595.4 L1001.9,587.4 L1002.4,591.9 L1002.9,595.4 L1003.5,591.5 L1004.1,589.6 L1004.6,588.8 L1005.2,585.9 L1005.8,585.2 L1006.3,587.5 L1006.8,587.7 L1007.3,590.3 L1008.0,593.0 L1008.5,592.7 L1008.8,594.7 L1009.1,594.3 L1009.6,591.3 L1010.2,591.0 L1010.8,592.3 L1011.3,591.1 L1011.7,593.2 L1012.4,592.5 L1013.2,589.6 L1013.6,590.0 L1014.1,593.8 L1014.6,594.7 L1015.2,600.9 L1015.7,607.2 L1016.4,599.6 L1016.8,592.5 L1017.5,585.8 L1017.9,583.7 L1018.6,602.7 L1019.0,611.6 L1019.7,603.5 L1020.1,600.6 L1020.9,592.5 L1021.4,594.8 L1022.0,592.7 L1022.4,594.7 L1023.1,590.8 L1023.6,584.2 L1023.9,583.0 L1024.2,586.5 L1024.9,591.8 L1025.3,592.0 L1025.9,596.2 L1026.4,596.2 L1027.0,601.8 L1027.8,611.6 L1028.1,607.7 L1028.9,594.7 L1029.2,591.7 L1029.7,589.6 L1030.4,593.6 L1030.9,593.6 L1031.2,595.4 L1031.5,597.6 L1032.0,599.5 L1032.7,605.0 L1033.2,593.6 L1033.7,577.1 L1034.3,582.6 L1034.7,588.8 L1035.0,568.2 L1035.4,577.1 L1036.0,587.8 L1036.5,577.5 L1037.2,567.0 L1037.6,577.3 L1038.1,586.6 L1039.0,568.2 L1039.3,570.7 L1040.1,580.5 L1040.4,576.7 L1041.1,568.2 L1041.6,569.1 L1042.3,571.9 L1042.7,573.9 L1043.2,573.6 L1043.6,575.6 L1044.4,581.0 L1045.0,584.1 L1045.5,578.4 L1046.0,573.1 L1046.6,569.4 L1047.2,563.3 L1047.7,560.1 L1048.2,559.1 L1048.8,564.6 L1049.4,568.2 L1050.0,561.5 L1050.3,558.5 L1051.1,558.1 L1051.5,556.6 L1052.2,561.6 L1052.5,564.6 L1052.8,563.1 L1053.3,557.1 L1053.6,556.6 L1053.9,559.4 L1054.4,559.3 L1054.8,562.1 L1055.6,559.7 L1056.0,556.0 L1056.8,538.9 L1057.2,532.0 L1057.6,527.9 L1058.6,524.2 L1058.9,526.6 L1059.4,526.7 L1060.0,534.8 L1060.3,538.9 L1060.6,540.9 L1061.3,541.3 L1061.7,542.2 L1062.1,545.0 L1062.9,558.5 L1063.4,563.8 L1064.0,567.0 L1064.7,556.0 L1065.1,552.6 L1065.8,547.5 L1066.2,543.2 L1066.5,537.7 L1066.8,537.5 L1067.3,538.5 L1068.0,530.3 L1068.4,534.5 L1069.2,538.9 L1069.6,534.3 L1070.2,530.3 L1070.7,531.0 L1071.1,531.0 L1072.0,538.9 L1072.4,541.2 L1072.9,546.2 L1073.5,545.7 L1074.1,543.8 L1074.7,536.5 L1075.2,527.6 L1075.6,520.6 L1076.2,515.7 L1076.9,526.7 L1077.4,537.6 L1077.8,545.6 L1078.5,536.6 L1078.8,535.2 L1079.1,539.6 L1079.6,543.8 L1080.2,535.6 L1080.5,532.8 L1080.8,531.5 L1081.5,524.8 L1081.9,522.4 L1082.4,521.9 L1082.7,520.6 L1083.0,521.1 L1083.6,524.7 L1083.9,524.2 L1084.7,522.7 L1085.1,523.0 L1086.0,514.5 L1086.4,517.2 L1087.0,519.3 L1087.5,517.3 L1088.2,518.1 L1088.6,522.6 L1089.2,525.5 L1089.7,519.9 L1090.3,515.7 L1090.8,515.1 L1091.2,513.8 L1092.2,512.6 L1092.5,513.0 L1093.1,515.7 L1093.3,493.7 L1093.7,476.8 L1094.1,424.7 L1094.9,96.5 L1095.9,345.0 L1097.0,376.0 L1097.8,420.0 L1098.1,418.3 L1098.6,412.0 L1099.2,404.0 L1099.9,398.7 L1100.4,392.9 L1101.0,383.4 L1101.7,404.8 L1102.0,387.8 L1102.6,364.2 L1103.0,345.0 L1103.8,378.9 L1104.5,401.8 L1104.8,393.8 L1105.6,378.9 L1106.0,389.3 L1106.6,406.3 L1107.1,416.8 L1107.8,436.1 L1108.2,415.8 L1108.9,375.8 L1109.3,388.1 L1109.8,403.3 L1110.4,401.3 L1110.9,397.9 L1111.6,404.2 L1112.0,409.4 L1112.7,425.5 L1113.2,435.3 L1114.0,447.6 L1114.4,444.5 L1114.9,441.0 L1115.2,438.4 L1115.5,432.9 L1116.2,423.1 L1116.6,419.6 L1117.2,411.5 L1117.8,406.3 L1118.5,388.0 L1119.0,360.5 L1119.4,377.2 L1119.8,391.1 L1120.4,412.4 L1121.1,406.9 L1121.6,404.8 L1122.2,405.3 L1122.8,403.6 L1123.1,404.8 L1123.9,414.3 L1124.6,420.1 L1125.0,415.9 L1125.6,412.6 L1125.9,409.4 L1126.9,395.6 L1127.2,398.3 L1128.0,406.3 L1128.4,404.3 L1128.9,398.1 L1129.2,397.2 L1129.5,395.8 L1130.0,390.7 L1130.7,386.5 L1131.2,396.7 L1131.8,409.4 L1132.3,378.9 L1132.6,360.5 L1133.3,352.9 L1134.1,334.6 L1134.5,342.3 L1135.0,348.3 L1135.6,370.3 L1135.9,380.4 L1136.2,382.3 L1136.9,382.7 L1137.2,342.2 L1137.4,306.0 L1137.9,303.4 L1138.2,304.1 L1139.0,297.9 L1139.5,292.2 L1140.1,294.0 L1140.9,297.7 L1141.2,296.7 L1141.8,293.1 L1142.4,302.9 L1142.8,313.3 L1143.5,316.5 L1144.0,316.9 L1144.6,320.3 L1145.2,325.9 L1145.9,329.8 L1146.3,324.6 L1146.8,319.6 L1147.3,312.3 L1148.0,312.6 L1148.5,315.6 L1148.8,315.1 L1149.1,313.7 L1149.6,314.3 L1150.1,313.3 L1150.8,298.6 L1151.3,302.3 L1151.9,308.7 L1152.5,345.3 L1153.2,365.5 L1153.6,363.1 L1154.1,357.0 L1154.7,352.7 L1155.2,349.1 L1155.6,344.4 L1156.5,360.0 L1156.9,366.0 L1157.4,373.8 L1158.0,375.8 L1158.7,376.5 L1159.2,385.2 L1159.8,400.5 L1160.5,378.3 L1160.8,378.5 L1161.4,376.5 L1162.0,376.5 L1162.5,347.4 L1162.9,324.3 L1163.8,360.0 L1164.2,382.0 L1164.8,382.8 L1165.3,386.2 L1165.7,385.7 L1166.4,377.9 L1167.0,374.7 L1167.6,335.1 L1167.9,310.5 L1168.7,302.5 L1169.3,297.7 L1169.8,296.2 L1170.3,292.2 L1170.9,278.6 L1171.5,267.4 L1172.0,317.9 L1172.5,358.2 L1173.2,356.3 L1173.6,279.3 L1174.3,277.5 L1175.0,277.5 L1175.4,314.2 L1176.1,349.0 L1176.5,355.5 L1177.0,361.8 L1177.6,362.3 L1178.2,365.9 L1178.5,365.5 L1178.8,367.3 L1179.3,374.7 L1179.8,378.3 L1180.4,369.9 L1180.7,368.3 L1181.0,375.1 L1181.6,385.7 L1182.2,398.5 L1182.6,413.2 L1183.4,448.7 L1183.8,442.4 L1184.6,432.8 L1184.9,433.3 L1185.5,429.1 L1186.0,429.6 L1186.3,427.9 L1186.6,432.8 L1187.1,445.0 L1187.7,448.6 L1188.3,449.6 L1188.8,453.5 L1189.4,456.0 L1190.0,456.3 L1190.5,459.9 L1191.0,460.9 L1191.6,451.6 L1192.4,442.5 L1192.8,445.9 L1193.3,446.5 L1194.1,452.3 L1194.4,449.0 L1194.9,441.3 L1195.6,439.7 L1196.1,440.4 L1196.7,438.0 L1197.3,437.6 L1197.8,435.9 L1198.4,430.8 L1198.9,429.1 L1199.3,426.6 L1200.0,436.4 L1200.3,441.3 L1200.6,436.8 L1201.0,427.9 L1201.7,440.0 L1202.2,449.9 L1202.8,458.2 L1203.4,462.3 L1203.9,468.2 L1204.5,466.1 L1205.1,462.8 L1205.6,461.8 L1205.9,459.7 L1206.2,460.6 L1206.8,465.8 L1207.1,467.0 L1207.9,458.4 L1208.3,454.8 L1209.0,466.6 L1209.6,474.3 L1210.1,463.9 L1210.7,455.0 L1211.0,447.4 L1212.0,484.1 L1212.4,487.5 L1212.9,496.4 L1213.2,498.8 L1213.5,489.2 L1214.0,474.6 L1214.4,463.3 L1215.2,455.0 L1215.7,449.9 L1216.3,450.6 L1216.8,449.5 L1217.6,449.9 L1218.0,445.5 L1218.5,435.7 L1218.8,432.8 L1219.1,433.0 L1219.6,429.8 L1220.1,429.1 L1221.0,456.0 L1221.3,402.2 L1221.9,409.8 L1222.5,415.6 L1223.2,427.9 L1223.6,421.7 L1224.2,412.0 L1224.7,404.0 L1225.4,388.5" fill="none" stroke="url(#lg)" stroke-width="1.8" stroke-linejoin="round" stroke-linecap="round"/>
<circle cx="1225.6" cy="388.5" r="3.5" fill="#6b62f0"/>
</svg>
<div class="yl" style="top:19.30px">62.00</div><div class="yl" style="top:64.30px">60.00</div><div class="yl" style="top:108.30px">58.00</div><div class="yl" style="top:153.30px">56.00</div><div class="yl" style="top:197.30px">54.00</div><div class="yl" style="top:241.30px">52.00</div><div class="yl" style="top:286.30px">50.00</div><div class="yl" style="top:330.30px">48.00</div><div class="yl" style="top:374.30px">46.00</div><div class="yl" style="top:419.30px">44.00</div><div class="yl" style="top:463.30px">42.00</div><div class="yl" style="top:507.30px">40.00</div><div class="yl" style="top:552.30px">38.00</div><div class="yl" style="top:596.30px">36.00</div><div class="yl" style="top:640.30px">34.00</div><div class="yl" style="top:685.30px">32.00</div>
<div class="xl" style="left:-12.80px">May</div><div class="xl" style="left:192.20px">Jun</div><div class="xl" style="left:391.20px">Jul</div><div class="xl" style="left:596.20px">Aug</div><div class="xl" style="left:801.20px">Sep</div><div class="xl" style="left:999.20px">Oct</div>
<div id="leg"><span class="" style="left:17.6px;letter-spacing:-0.5px">BTC</span><span class="" style="left:45.4px;letter-spacing:0px">Volatility</span><span class="" style="left:96.4px;letter-spacing:-0.17px">Index</span><span class="" style="left:130.2px;letter-spacing:0px">·</span><span class="" style="left:137.9px;letter-spacing:-0.4px">2h</span><span class="" style="left:155.5px;letter-spacing:0px">·</span><span class="" style="left:161.7px;letter-spacing:0.1px">Deribit</span><span class="v" style="left:207.3px;letter-spacing:-0.55px">45.71</span><span class="v" style="left:244.1px;letter-spacing:-0.18px;word-spacing:1.2px">+0.92 (+2.05%)</span></div>
<div id="plabel"><div style="top:1.5px;left:8.5px">45.71</div><div style="top:15.5px;left:9.1px">18:42</div></div>
</div></div>
<svg id="logo" width="1293" height="818" viewBox="0 0 1293 818">
<g fill="#dedede">
<path d="M11.95 780.05 H23.95 V794.9 H17.9 V786 H11.95 Z"/>
<circle cx="28.9" cy="783.1" r="2.9"/>
<path d="M34.6 780.05 H41.95 L36.1 794.9 H29 Z"/>
</g>
</svg>
<div id="logotxt">TradingView</div>
</body></html>
